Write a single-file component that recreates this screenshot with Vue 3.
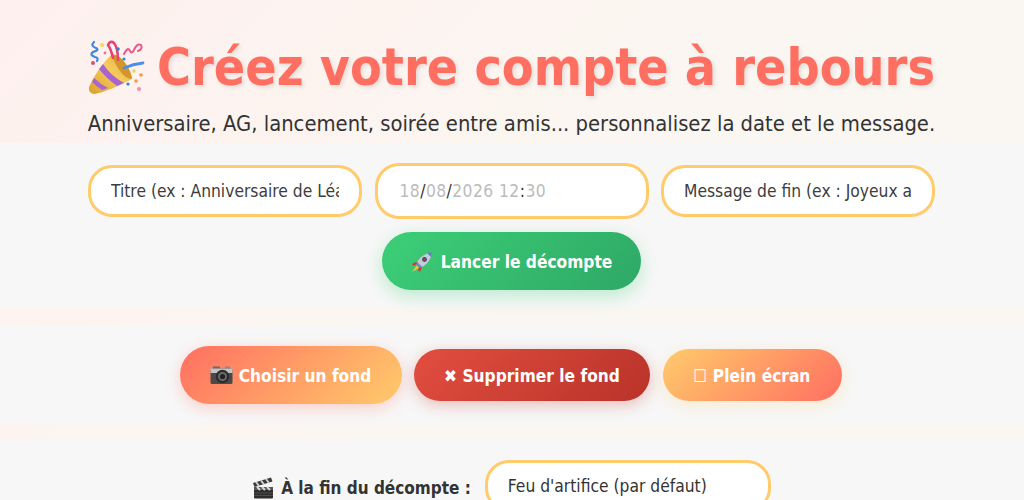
<template>
  <div class="page">
    <header class="entete">
      <h1 class="titre">
        <svg class="icone-fete" viewBox="0 0 58 54" aria-hidden="true">
          <defs>
            <linearGradient id="cone" x1="0" y1="1" x2="1" y2="0">
              <stop offset="0" stop-color="#d9a02c" />
              <stop offset="0.55" stop-color="#f6cb5c" />
              <stop offset="1" stop-color="#e3a934" />
            </linearGradient>
          </defs>
          <path d="M24 14 L44 39 Q24 50 7 54 Q0 54 1 47 Q9 29 24 14 Z" fill="url(#cone)" />
          <path d="M24 14 Q32 15 38 24 Q44 33 44 39 Q38 39 32 31 Q26 23 24 14 Z" fill="#d2962a" />
          <path d="M15 24 Q23 36 36 43 L29 46 Q18 38 11 29 Z" fill="#a865cf" />
          <path d="M6 38 Q12 44 20 48 L14 50 Q8 46 4 42 Z" fill="#a865cf" />
          <path d="M36 28 Q45 24 55 23" fill="none" stroke="#4d8fe8" stroke-width="2.800" stroke-linecap="round" />
          <path d="M25 18 Q23 9 20 5 Q22 0 26 3 Q30 8 30 20" fill="none" stroke="#e8436e" stroke-width="2.600" stroke-linecap="round" />
          <path d="M6 2 Q2 6 8 8 Q12 10 5 12 Q1 15 7 17 Q11 18 9 21" fill="none" stroke="#3f86e0" stroke-width="2.200" stroke-linecap="round" />
          <path d="M36 14 Q40 6 42 11 Q44 15 47 8 Q50 3 53 5 Q55 9 50 11" fill="none" stroke="#ea5a8a" stroke-width="2" stroke-linecap="round" />
          <circle cx="14" cy="5" r="2" fill="#f6d94e" />
          <circle cx="30" cy="9" r="1.800" fill="#2f7fe0" />
          <circle cx="17" cy="13" r="1.400" fill="#ef6f9a" />
          <circle cx="36" cy="19" r="1.600" fill="#2f7fe0" />
          <circle cx="5" cy="23" r="2" fill="#dc4f6e" />
          <circle cx="46" cy="31" r="1.800" fill="#f4d24a" />
          <circle cx="53" cy="35" r="1.800" fill="#f29a4a" />
          <circle cx="48" cy="41" r="1.800" fill="#f29a4a" />
          <circle cx="40" cy="44" r="1.600" fill="#2f7fe0" />
          <circle cx="51" cy="49" r="2" fill="#f08ab4" />
        </svg>
        <span>Créez votre compte à rebours</span>
      </h1>
      <p class="sous-titre">Anniversaire, AG, lancement, soirée entre amis... personnalisez la date et le message.</p>
    </header>

    <section class="bloc bloc-form">
      <div class="champs">
        <input class="champ" type="text" placeholder="Titre (ex : Anniversaire de Léa)" />
        <div class="champ champ-date">
          <span class="gris">18</span>/<span class="gris">08</span>/<span class="gris">2026 12</span>:<span class="gris">30</span>
        </div>
        <input class="champ" type="text" placeholder="Message de fin (ex : Joyeux anniversaire !)" />
      </div>
      <button class="btn btn-vert">
        <svg class="icone" viewBox="0 0 22 22" aria-hidden="true">
          <path d="M6 14 L1 21 L8 17 Z" fill="#f7c23c" />
          <path d="M5 11 L1 13 L3 15 L7 12 Z" fill="#e0312c" />
          <path d="M11 16 L9 21 L7 19 L9 14 Z" fill="#e0312c" />
          <path d="M6 11 Q11 3 21 1 Q20 11 11 16 Z" fill="#c3ccd8" />
          <path d="M16 2 Q19 1.500 21 1 Q20.500 4 20 6 Z" fill="#5a7fb8" />
          <path d="M6 11 L11 16 L8.500 17 L5 13.500 Z" fill="#6d8ab8" />
          <circle cx="13.500" cy="8.500" r="2.400" fill="#3a4a66" />
          <circle cx="13.500" cy="8.500" r="1.300" fill="#b4384a" />
        </svg>
        <span>Lancer le décompte</span>
      </button>
    </section>

    <section class="bloc bloc-actions">
      <button class="btn btn-fond">
        <svg class="icone icone-photo" viewBox="0 0 23 19" aria-hidden="true">
          <rect x="3" y="0.500" width="7" height="3" fill="#6b6b6b" />
          <rect x="15" y="0.500" width="5" height="3" fill="#8a8a8a" />
          <rect x="0.500" y="2.500" width="22" height="15.500" rx="1.500" fill="#4a4a4a" />
          <rect x="0.500" y="2.500" width="22" height="4.500" fill="#c4c4c4" />
          <circle cx="12.500" cy="10.500" r="6.800" fill="#2c2c2c" />
          <circle cx="12.500" cy="10.500" r="4.500" fill="#6a6a6a" />
          <circle cx="12.500" cy="10.500" r="2.600" fill="#222" />
        </svg>
        <span>Choisir un fond</span>
      </button>
      <button class="btn btn-petit btn-rouge">✖ Supprimer le fond</button>
      <button class="btn btn-petit btn-ecran">☐ Plein écran</button>
    </section>

    <section class="bloc bloc-fin">
      <label class="libelle">
        <svg class="icone icone-clap" viewBox="0 0 22 22" aria-hidden="true">
          <path d="M1 6 L19 0.500 L20.500 4.500 L2.500 10 Z" fill="#3a3a3a" />
          <path d="M4 5 L7 9 M9 3.500 L12 7.500 M14 2 L17 6" stroke="#cfcfcf" stroke-width="2" />
          <rect x="2" y="10" width="19" height="11.500" rx="1" fill="#2e2e2e" />
          <path d="M2 10 H21 V13 H2 Z" fill="#555" />
          <path d="M5 10 L8 13 M10 10 L13 13 M15 10 L18 13" stroke="#d8d8d8" stroke-width="2" />
          <path d="M2 16 H21 M2 18.500 H21" stroke="#555" stroke-width="0.800" />
        </svg>
        <span>À la fin du décompte :</span>
      </label>
      <select class="champ liste">
        <option>Feu d'artifice (par défaut)</option>
      </select>
    </section>
  </div>
</template>

<script setup>
</script>

<style>
html,
body {
  margin: 0;
  overflow: hidden;
}
</style>

<style scoped>
.page {
  min-height: 100vh;
  background: linear-gradient(135deg, #fef0ee 0%, #fbf6f1 45%, #faf6f2 100%);
  font-family: "DejaVu Sans", "Liberation Sans", sans-serif;
  font-stretch: condensed;
  color: #333;
}

.entete {
  height: 143px;
  box-sizing: border-box;
  padding: 41px 1px 0 0;
  text-align: center;
}

.titre {
  margin: 0;
  display: flex;
  justify-content: center;
  align-items: center;
  gap: 11px;
  height: 53px;
  font-size: 51.5px;
  font-weight: 700;
  line-height: 53px;
  color: #ff6f61;
  text-shadow: 2px 2px 4px rgba(0, 0, 0, 0.1);
  white-space: nowrap;
}

.icone-fete {
  width: 58px;
  height: 54px;
  flex: none;
  margin-top: -2px;
}

.sous-titre {
  margin: 16px 0 0;
  font-size: 21.8px;
  line-height: 28px;
  color: #333;
  white-space: nowrap;
}

.bloc {
  background: #f7f7f7;
  display: flex;
  justify-content: center;
  align-items: center;
  padding-right: 1px;
  box-sizing: border-box;
}

.bloc-form {
  height: 165px;
  flex-direction: column;
  justify-content: flex-start;
  padding-top: 20px;
}

.champs {
  display: flex;
  align-items: center;
  gap: 12.5px;
  margin-bottom: 13px;
}

.champ {
  box-sizing: border-box;
  width: 274px;
  height: 52px;
  padding: 0 20px;
  border: 3px solid #ffcb6b;
  border-radius: 24px;
  background: #fff;
  font-family: inherit;
  font-stretch: condensed;
  font-size: 17.3px;
  color: #333;
  outline: none;
}

.champ::placeholder {
  color: #3d3d3d;
  opacity: 1;
}

.champ-date {
  height: 56px;
  display: flex;
  align-items: center;
  white-space: pre;
  letter-spacing: 0.45px;
  padding-left: 22px;
}

.gris {
  color: #bbb;
}

.btn {
  display: inline-flex;
  align-items: center;
  justify-content: center;
  gap: 8px;
  height: 58px;
  padding: 2px 30px 0;
  border: none;
  border-radius: 29px;
  font-family: inherit;
  font-stretch: condensed;
  font-size: 17.2px;
  font-weight: 700;
  color: #fff;
  cursor: pointer;
  white-space: nowrap;
}

.btn-petit {
  height: 52px;
  border-radius: 26px;
}

.btn-vert {
  width: 259px;
  background: linear-gradient(135deg, #3dcf77, #2ea866);
  box-shadow: 0 6px 18px rgba(46, 204, 113, 0.3);
}

.icone {
  width: 22px;
  height: 22px;
  flex: none;
}

.icone-photo {
  width: 23px;
  height: 19px;
}

.bloc-actions {
  margin-top: 18px;
  height: 97px;
  gap: 12.5px;
  padding-right: 3px;
}

.btn-fond {
  width: 222px;
  gap: 6px;
  background: linear-gradient(135deg, #ff6f61, #ffcb6b);
  box-shadow: 0 4px 15px rgba(255, 111, 97, 0.3);
}

.btn-rouge {
  width: 236px;
  background: linear-gradient(135deg, #e24e40, #b93229);
  box-shadow: 0 4px 15px rgba(192, 57, 43, 0.3);
}

.btn-ecran {
  width: 179px;
  background: linear-gradient(135deg, #ffcb6b, #ff6f61);
  box-shadow: 0 4px 15px rgba(255, 203, 107, 0.3);
}

.bloc-fin {
  margin-top: 17px;
  height: 110px;
  align-items: flex-start;
  padding-top: 20px;
  gap: 14px;
}

.libelle {
  display: flex;
  align-items: center;
  gap: 7px;
  height: 52px;
  font-size: 17px;
  font-weight: 700;
  color: #333;
  padding-top: 3px;
  box-sizing: border-box;
}

.liste {
  width: 286px;
  appearance: none;
}
</style>
